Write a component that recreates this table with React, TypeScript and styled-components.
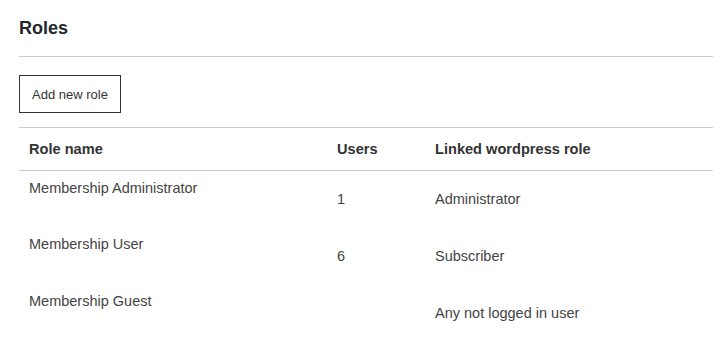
import React from 'react';
import styled, { createGlobalStyle } from 'styled-components';

const GlobalStyle = createGlobalStyle`
  body {
    margin: 0;
    background: #fff;
    font-family: "Liberation Sans", Arial, sans-serif;
    color: #444;
  }
`;

const Page = styled.div`
  padding: 0 12px 0 19px;
`;

const Title = styled.h2`
  margin: 0;
  padding: 17px 0 17px;
  font-size: 18px;
  line-height: 22px;
  font-weight: 700;
  color: #23282d;
  border-bottom: 1px solid #ccc;
`;

const Toolbar = styled.div`
  padding: 18px 0 14px;
  border-bottom: 1px solid #ccc;
`;

const Button = styled.button`
  display: block;
  height: 38px;
  padding: 0 12px;
  background: #fff;
  border: 1px solid #333;
  font-family: inherit;
  font-size: 13px;
  color: #333;
  cursor: pointer;
`;

const Table = styled.table`
  width: 100%;
  table-layout: fixed;
  border-collapse: collapse;
`;

const HeadCell = styled.th<{ $width?: number }>`
  width: ${({ $width }) => ($width ? `${$width}px` : 'auto')};
  height: 42px;
  padding: 0 10px;
  box-sizing: border-box;
  text-align: left;
  font-size: 14.6px;
  font-weight: 700;
  color: #333;
  border-bottom: 1px solid #ccc;
`;

const Row = styled.tr`
  height: 57px;
`;

const Cell = styled.td<{ $top?: boolean }>`
  padding: ${({ $top }) => ($top ? '8px 10px 0' : '0 10px')};
  vertical-align: ${({ $top }) => ($top ? 'top' : 'middle')};
  font-size: 14.5px;
  line-height: 18px;
  color: #444;
`;

const roles = [
  { name: 'Membership Administrator', users: '1', linked: 'Administrator' },
  { name: 'Membership User', users: '6', linked: 'Subscriber' },
  { name: 'Membership Guest', users: '', linked: 'Any not logged in user' },
];

const App: React.FC = () => {
  return (
    <>
      <GlobalStyle />
      <Page>
        <Title>Roles</Title>
        <Toolbar>
          <Button>Add new role</Button>
        </Toolbar>
        <Table>
          <thead>
            <tr>
              <HeadCell $width={308}>Role name</HeadCell>
              <HeadCell $width={98}>Users</HeadCell>
              <HeadCell>Linked wordpress role</HeadCell>
            </tr>
          </thead>
          <tbody>
            {roles.map((role) => (
              <Row key={role.name}>
                <Cell $top>{role.name}</Cell>
                <Cell>{role.users}</Cell>
                <Cell>{role.linked}</Cell>
              </Row>
            ))}
          </tbody>
        </Table>
      </Page>
    </>
  );
};

export default App;
